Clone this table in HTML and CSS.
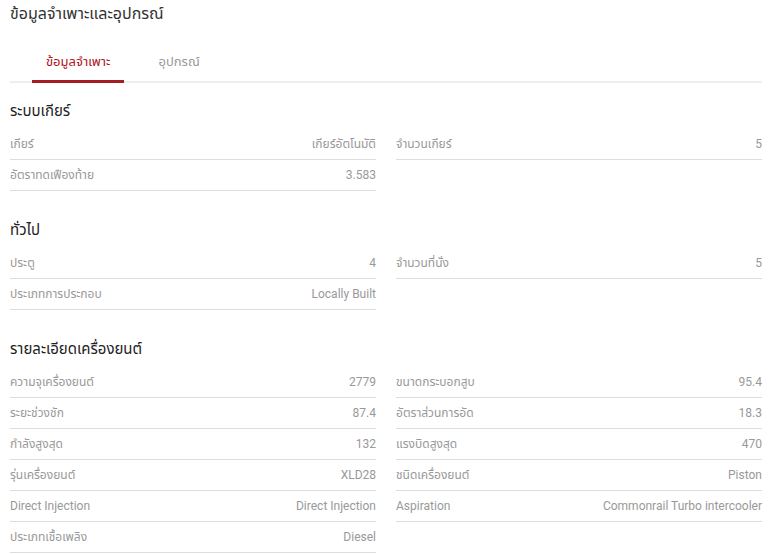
FILE: index.html
```html
<!DOCTYPE html>
<html lang="th">
<head>
    <meta charset="UTF-8">
    <title>ข้อมูลจำเพาะและอุปกรณ์</title>
    <link rel="stylesheet" href="styles.css">
</head>
<body>
    <div class="specs">
        <h1 class="specs-title">ข้อมูลจำเพาะและอุปกรณ์</h1>

        <div class="tabs">
            <a class="tab active">ข้อมูลจำเพาะ</a>
            <a class="tab">อุปกรณ์</a>
        </div>

        <section class="group">
            <h2>ระบบเกียร์</h2>
            <div class="grid">
                <div class="row"><span>เกียร์</span><span>เกียร์อัตโนมัติ</span></div>
                <div class="row"><span>จำนวนเกียร์</span><span>5</span></div>
                <div class="row"><span>อัตราทดเฟืองท้าย</span><span>3.583</span></div>
            </div>
        </section>

        <section class="group">
            <h2>ทั่วไป</h2>
            <div class="grid">
                <div class="row"><span>ประตู</span><span>4</span></div>
                <div class="row"><span>จำนวนที่นั่ง</span><span>5</span></div>
                <div class="row"><span>ประเภทการประกอบ</span><span>Locally Built</span></div>
            </div>
        </section>

        <section class="group">
            <h2>รายละเอียดเครื่องยนต์</h2>
            <div class="grid">
                <div class="row"><span>ความจุเครื่องยนต์</span><span>2779</span></div>
                <div class="row"><span>ขนาดกระบอกสูบ</span><span>95.4</span></div>
                <div class="row"><span>ระยะช่วงชัก</span><span>87.4</span></div>
                <div class="row"><span>อัตราส่วนการอัด</span><span>18.3</span></div>
                <div class="row"><span>กำลังสูงสุด</span><span>132</span></div>
                <div class="row"><span>แรงบิดสูงสุด</span><span>470</span></div>
                <div class="row"><span>รุ่นเครื่องยนต์</span><span>XLD28</span></div>
                <div class="row"><span>ชนิดเครื่องยนต์</span><span>Piston</span></div>
                <div class="row"><span>Direct Injection</span><span>Direct Injection</span></div>
                <div class="row"><span>Aspiration</span><span>Commonrail Turbo intercooler</span></div>
                <div class="row"><span>ประเภทเชื้อเพลิง</span><span>Diesel</span></div>
            </div>
        </section>
    </div>
</body>
</html>
```

FILE: styles.css
```css
body {
    margin: 0;
    font-family: Roboto, "Noto Sans", "Noto Sans Thai", sans-serif;
    background: #fff;
    color: #333;
}
.specs {
    padding: 3px 8px 0 10px;
}
.specs-title {
    font-size: 16px;
    font-weight: 400;
    margin: 0;
    line-height: 22px;
    color: #333;
}
.tabs {
    display: flex;
    padding-left: 22px;
    margin-top: 27px;
    border-bottom: 2px solid #eee;
}
.tab {
    font-size: 13px;
    color: #999;
    padding: 0 14px;
    height: 28px;
    line-height: 20px;
    margin-right: 20px;
    cursor: pointer;
}
.tab.active {
    color: #b0121b;
    border-bottom: 3px solid #a51d24;
    margin-bottom: -2px;
}
.group {
    margin-top: 16px;
}
.group + .group {
    margin-top: 27px;
}
.group h2 {
    font-size: 15px;
    font-weight: 400;
    margin: 0;
    line-height: 24px;
    color: #222;
}
.grid {
    display: grid;
    grid-template-columns: 1fr 1fr;
    column-gap: 20px;
    margin-top: 6px;
}
.row {
    display: flex;
    justify-content: space-between;
    font-size: 12px;
    color: #999;
    height: 30px;
    line-height: 30px;
    border-bottom: 1px solid #ddd;
}
```
